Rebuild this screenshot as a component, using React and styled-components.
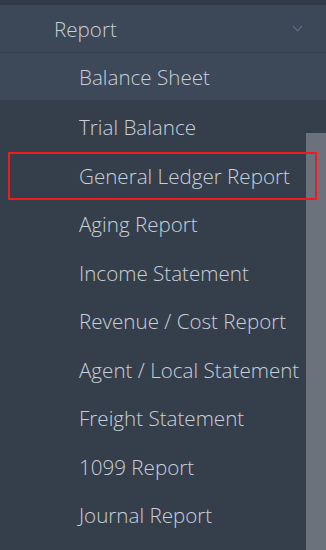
import React from "react"
import styled, {createGlobalStyle} from "styled-components"

const Global = createGlobalStyle`
  html, body { margin: 0; padding: 0; background: #353e4b; }
  body { font-family: "Open Sans", "Liberation Sans", sans-serif; }
`

const Sidebar = styled.nav`
  width: 326px;
  height: 550px;
  background: #353e4b;
  border-top: 5px solid #313a46;
  box-sizing: border-box;
  overflow: hidden;
  display: flex;
  flex-direction: column;
  color: #c8d0d9;
  font-size: 20.6px;
  font-weight: 300;
`

const GroupHead = styled.div`
  height: 47px;
  display: flex;
  align-items: center;
  justify-content: space-between;
  padding: 0 23px 0 54px;
  background: #3c4757;
  border-bottom: 1px solid #334050;
`

const Chevron = () => (
  <svg width="11" height="7" viewBox="0 0 11 7">
    <path d="M1 1 L5.5 5.8 L10 1" fill="none" stroke="#5b6e86" strokeWidth="1.2" />
  </svg>
)

const Active = styled.div`
  height: 47px;
  display: flex;
  align-items: center;
  padding-left: 79px;
  background: #3d4858;
`

const Lower = styled.div`
  flex: 1;
  display: flex;
`

const List = styled.ul`
  flex: 1;
  list-style: none;
  margin: 0;
  padding: 0;
`

const Item = styled.li`
  position: relative;
  height: 48.5px;
  display: flex;
  align-items: center;
  padding-left: 79px;
  padding-top: ${p => (p.$first ? "3px" : "0")};
  white-space: nowrap;
`

const Mark = styled.span`
  position: absolute;
  left: 8px;
  right: -11px;
  top: 0;
  bottom: 0;
  border: 2px solid #ee1c1c;
  z-index: 2;
`

const Track = styled.div`
  width: 20px;
  display: flex;
  flex-direction: column;
`

const Thumb = styled.div`
  flex: 1;
  margin-top: 33px;
  background: #6b727c;
`

const items = [
  "Trial Balance",
  "General Ledger Report",
  "Aging Report",
  "Income Statement",
  "Revenue / Cost Report",
  "Agent / Local Statement",
  "Freight Statement",
  "1099 Report",
  "Journal Report",
]

export default function App() {
  return (
    <>
      <Global />
      <Sidebar>
        <GroupHead>
          <span>Report</span>
          <Chevron />
        </GroupHead>
        <Active>Balance Sheet</Active>
        <Lower>
          <List>
            {items.map((t, i) => (
              <Item key={t} $first={i === 0}>
                {t}
                {t === "General Ledger Report" && <Mark />}
              </Item>
            ))}
          </List>
          <Track>
            <Thumb />
          </Track>
        </Lower>
      </Sidebar>
    </>
  )
}
